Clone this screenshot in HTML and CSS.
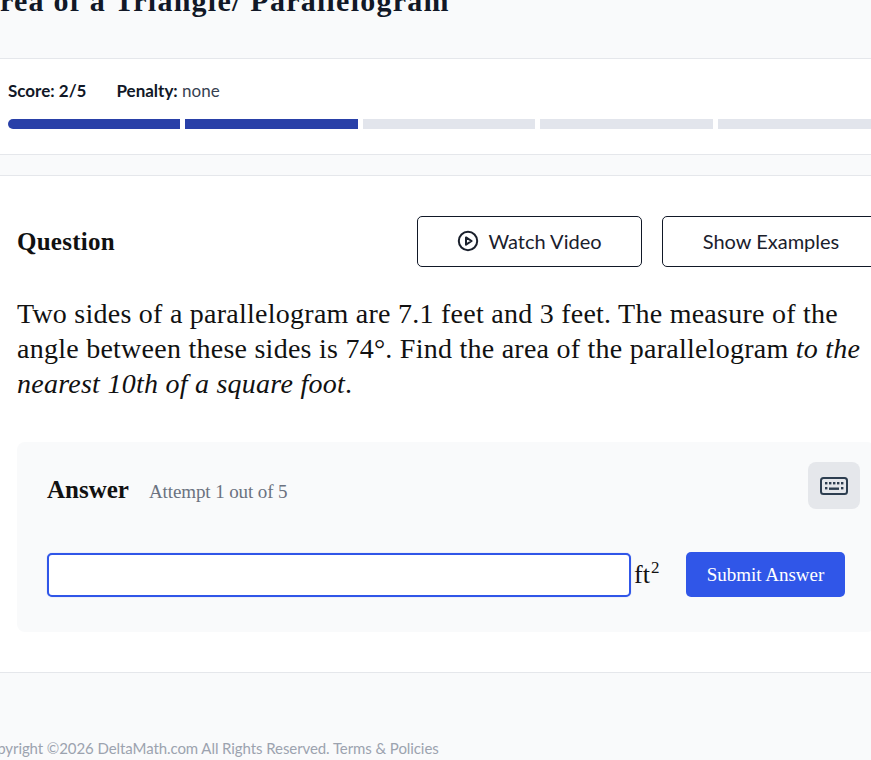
FILE: index.html
```html
<!DOCTYPE html>
<html lang="en">

<head>
    <meta charset="UTF-8">
    <meta name="viewport" content="width=device-width, initial-scale=1.0">
    <title>Area of a Triangle/ Parallelogram</title>
    <link rel="stylesheet" href="styles.css">
</head>

<body>
    <div class="page">
        <header class="title-bar">
            <h1>Area of a Triangle/ Parallelogram</h1>
        </header>

        <!-- Score and progress -->
        <section class="score-bar">
            <div class="score-text">
                <span class="score"><b>Score: 2/5</b></span>
                <span><b>Penalty:</b> <span class="penalty">none</span></span>
            </div>
            <div class="progress">
                <div class="segment done first"></div>
                <div class="segment done"></div>
                <div class="segment"></div>
                <div class="segment"></div>
                <div class="segment last"></div>
            </div>
        </section>

        <div class="spacer"></div>

        <main class="question">
            <div class="question-head">
                <h2>Question</h2>
                <div class="actions">
                    <button class="outline-btn video-btn">
                        <svg class="play-icon" viewBox="0 0 22 22" width="22" height="22" fill="none" stroke="#1a202c" stroke-width="2" stroke-linejoin="round">
                            <circle cx="11" cy="11" r="9.2"></circle>
                            <path d="M9 7.4 L14.6 11 L9 14.6 Z"></path>
                        </svg>
                        Watch Video
                    </button>
                    <button class="outline-btn examples-btn">Show Examples</button>
                </div>
            </div>

            <p class="prompt">Two sides of a parallelogram are 7.1 feet and 3 feet. The measure of the angle between these sides is 74°. Find the area of the parallelogram <em>to the nearest 10th of a square foot</em>.</p>

            <!-- Answer panel -->
            <section class="answer">
                <div class="answer-head">
                    <div class="answer-title">
                        <h3>Answer</h3>
                        <span class="attempt">Attempt 1 out of 5</span>
                    </div>
                    <button class="keyboard-btn" aria-label="Keyboard">
                        <svg viewBox="0 0 28 18" width="28" height="18" fill="#2d3e50">
                            <rect x="1" y="1" width="26" height="16" rx="2.5" fill="none" stroke="#2d3e50" stroke-width="2"></rect>
                            <rect x="5" y="5" width="2.4" height="2.4"></rect>
                            <rect x="9" y="5" width="2.4" height="2.4"></rect>
                            <rect x="13" y="5" width="2.4" height="2.4"></rect>
                            <rect x="17" y="5" width="2.4" height="2.4"></rect>
                            <rect x="21" y="5" width="2.4" height="2.4"></rect>
                            <rect x="5" y="10" width="2.4" height="2.4"></rect>
                            <rect x="9" y="10.5" width="10" height="2.4"></rect>
                            <rect x="21" y="10" width="2.4" height="2.4"></rect>
                        </svg>
                    </button>
                </div>
                <div class="answer-row">
                    <input class="answer-input" type="text">
                    <span class="unit">ft<sup>2</sup></span>
                    <button class="submit-btn">Submit Answer</button>
                </div>
            </section>
        </main>

        <footer class="footer">
            <p>Copyright ©2026 DeltaMath.com All Rights Reserved. Terms &amp; Policies</p>
        </footer>
    </div>
</body>

</html>
```

FILE: styles.css
```css
html, body {
    margin: 0;
    padding: 0;
    height: 760px;
    overflow: hidden;
    background-color: #f9fafb;
}

body {
    font-family: Lato, sans-serif;
    color: #111827;
}

.page {
    width: 900px;
}

.title-bar {
    height: 58px;
    border-bottom: 1px solid #e5e7eb;
    overflow: hidden;
}

h1 {
    margin: -17px 0 0 -23px;
    font-family: "Liberation Serif", serif;
    font-size: 30px;
    line-height: 36px;
    font-weight: bold;
    letter-spacing: 1.25px;
    color: #111827;
}

.score-bar {
    height: 95px;
    background-color: #fff;
    border-bottom: 1px solid #e5e7eb;
    padding-left: 8px;
}

.score-text {
    display: flex;
    gap: 30px;
    padding-top: 22px;
    font-size: 17px;
    line-height: 20px;
}

.score-text b {
    font-weight: bold;
    color: #111827;
}

.penalty {
    color: #374151;
}

.progress {
    display: flex;
    gap: 5px;
    margin-top: 18px;
}

.segment {
    width: 172.4px;
    height: 10px;
    background-color: #e2e5ec;
}

.segment.done {
    background-color: #2940a8;
}

.segment.first {
    border-radius: 5px 0 0 5px;
}

.segment.last {
    border-radius: 0 5px 5px 0;
}

.spacer {
    height: 20px;
}

.question {
    height: 498px;
    background-color: #fff;
    border-top: 1px solid #e5e7eb;
    border-bottom: 1px solid #e5e7eb;
    padding: 40px 0 0 17px;
    box-sizing: border-box;
}

.question-head {
    display: flex;
    align-items: center;
    justify-content: space-between;
    width: 863px;
}

h2 {
    margin: 0;
    font-family: "Liberation Serif", serif;
    font-size: 25px;
    font-weight: bold;
    letter-spacing: 0.25px;
    color: #111;
}

.actions {
    display: flex;
    gap: 20px;
}

.outline-btn {
    display: flex;
    align-items: center;
    justify-content: center;
    gap: 9px;
    height: 51px;
    padding: 0 0 2px;
    background-color: #fff;
    border: 1px solid #111827;
    border-radius: 5px;
    font-family: Lato, sans-serif;
    font-size: 20px;
    color: #1a202c;
}

.video-btn {
    width: 225px;
}

.examples-btn {
    width: 218px;
}

.prompt {
    margin: 29px 0 0;
    width: 852px;
    font-family: "Liberation Serif", serif;
    font-size: 28px;
    line-height: 35px;
    letter-spacing: 0.25px;
    color: #111;
}

.answer {
    margin-top: 41px;
    width: 858px;
    height: 190px;
    background-color: #f9fafb;
    border-radius: 8px;
    padding: 20px 0 0 30px;
    box-sizing: border-box;
}

.answer-head {
    display: flex;
    align-items: center;
    justify-content: space-between;
    padding-right: 15px;
}

.answer-title {
    display: flex;
    align-items: baseline;
    gap: 20px;
    padding-top: 9px;
}

h3 {
    margin: 0;
    font-family: "Liberation Serif", serif;
    font-size: 25px;
    font-weight: bold;
    color: #111;
}

.attempt {
    font-family: "Liberation Serif", serif;
    font-size: 19px;
    letter-spacing: -0.1px;
    color: #6b7280;
}

.keyboard-btn {
    display: flex;
    align-items: center;
    justify-content: center;
    width: 52px;
    height: 47px;
    padding: 0;
    border: none;
    border-radius: 8px;
    background-color: #e5e7eb;
}

.answer-row {
    display: flex;
    align-items: center;
    margin-top: 43px;
}

.answer-input {
    width: 584px;
    height: 44px;
    box-sizing: border-box;
    border: 2px solid #3056e8;
    border-radius: 5px;
    background-color: #fff;
    outline: none;
    box-shadow: 0 0 1px rgba(48, 86, 232, 0.5);
}

.unit {
    width: 52px;
    margin-left: 3px;
    font-family: "Liberation Serif", serif;
    font-size: 26px;
    color: #111;
}

.unit sup {
    font-size: 17px;
    line-height: 0;
    margin-left: 1px;
}

.submit-btn {
    width: 159px;
    height: 45px;
    border: none;
    border-radius: 5px;
    background-color: #3056e8;
    color: #fff;
    font-family: "Liberation Serif", serif;
    font-size: 19px;
}

.footer {
    padding-top: 65px;
}

.footer p {
    margin: 0 0 0 -21px;
    font-size: 15px;
    line-height: 20px;
    letter-spacing: -0.08px;
    color: #9ca3af;
}
```
